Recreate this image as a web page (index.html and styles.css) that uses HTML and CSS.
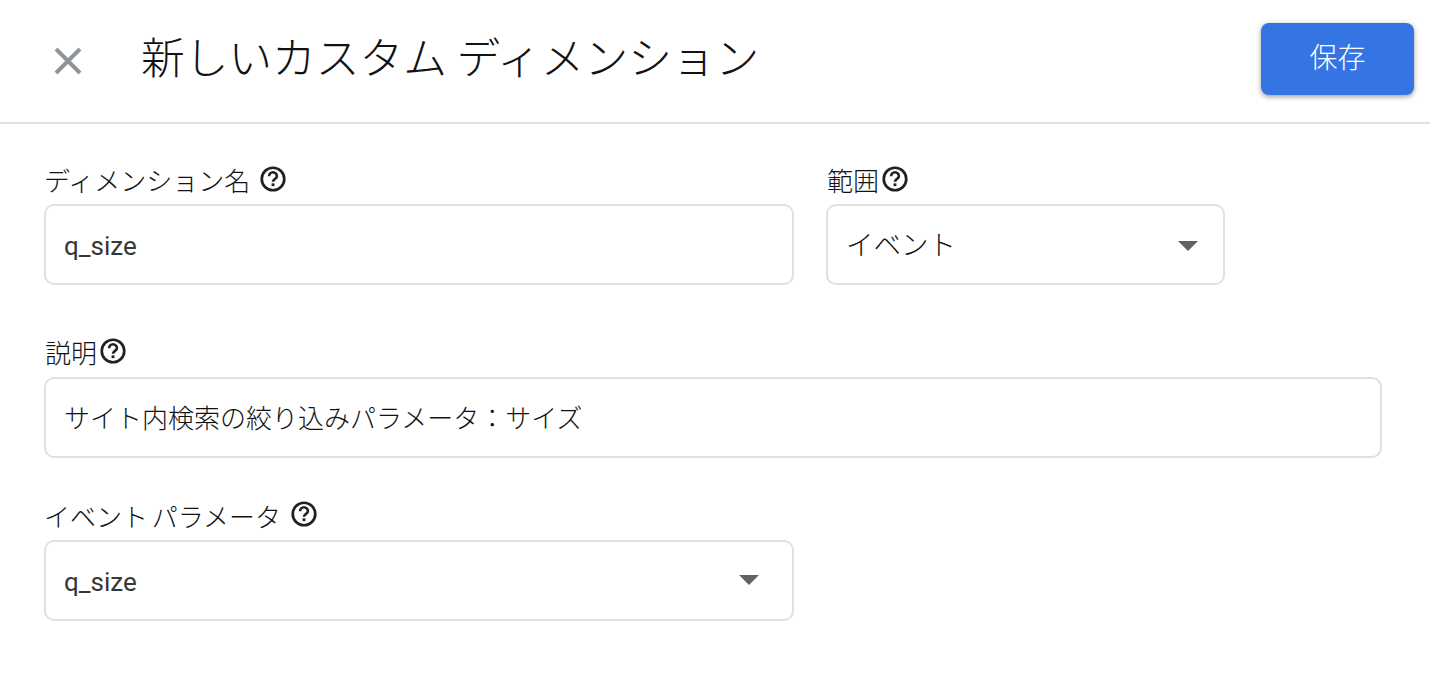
FILE: index.html
```html
<!DOCTYPE html>
<html lang="ja">
<head>
<meta charset="utf-8">
<title>新しいカスタム ディメンション</title>
<link rel="stylesheet" href="styles.css">
</head>
<body>
<svg class="defs" width="0" height="0" aria-hidden="true"><symbol id="help" viewBox="0 0 24 24"><circle cx="12" cy="12" r="10.4" fill="none" stroke="#202124" stroke-width="2.5"/><path d="M8.4 9.4a3.6 3.6 0 0 1 7.2 0c0 2.4-3.6 2.6-3.6 5.1" fill="none" stroke="#202124" stroke-width="2.4"/><rect x="10.7" y="16" width="2.6" height="2.6" fill="#202124"/></symbol></svg>
<header class="topbar">
  <button class="close" aria-label="閉じる">
    <svg viewBox="0 0 28 28" width="28" height="28"><path d="M2 2 26 26M26 2 2 26" fill="none" stroke="#8f9499" stroke-width="4"/></svg>
  </button>
  <h1 class="title">新しいカスタム ディメンション</h1>
  <button class="save">保存</button>
</header>
<main class="form">
  <div class="row row-first">
    <div class="field field-name">
      <div class="label">ディメンション名<svg class="help help-gap"><use href="#help"/></svg></div>
      <div class="box">q_size</div>
    </div>
    <div class="field field-scope">
      <div class="label label-inset">範囲<svg class="help"><use href="#help"/></svg></div>
      <div class="box select select-scope"><span class="scope-text">イベント</span><span class="arrow"></span></div>
    </div>
  </div>
  <div class="row row-desc">
    <div class="field field-full">
      <div class="label label-inset">説明<svg class="help"><use href="#help"/></svg></div>
      <div class="box box-desc">サイト内検索の絞り込みパラメータ：サイズ</div>
    </div>
  </div>
  <div class="row row-param">
    <div class="field field-name">
      <div class="label">イベント パラメータ<svg class="help help-gap"><use href="#help"/></svg></div>
      <div class="box select select-param">q_size<span class="arrow"></span></div>
    </div>
  </div>
</main>
</body>
</html>
```
FILE: styles.css
```css
* { box-sizing: border-box; }
html, body { margin: 0; height: 100%; background: #fff; overflow: hidden; }
body { font-family: Roboto, "Noto Sans CJK JP", sans-serif; color: #2a2b2d; }
.defs { display: block; height: 0; }
.topbar {
  display: flex;
  align-items: center;
  height: 124px;
  border-bottom: 2px solid #dfe0e2;
  padding: 0 16px 0 54px;
}
.close { width: 28px; height: 28px; padding: 0; border: 0; background: none; display: block; margin-right: 59px; }
.close svg { display: block; }
.title {
  margin: 0 0 12px;
  flex: 1;
  font-weight: 300;
  font-size: 43.7px;
  line-height: 60px;
  font-family: "Noto Sans CJK JP", sans-serif;
  color: #111214;
}
.save {
  width: 153px;
  height: 72px;
  margin-bottom: 4px;
  padding: 0 0 6px;
  border: 0;
  border-radius: 8px;
  background: #3574e3;
  color: #fff;
  font-family: "Noto Sans CJK JP", sans-serif;
  font-weight: 300;
  font-size: 28px;
  box-shadow: 0 2px 4px rgba(60,64,67,.35), 0 1px 6px rgba(60,64,67,.2);
}
.form { padding: 0 48px 0 44px; }
.row { display: flex; gap: 32px; }
.row-first { padding-top: 40px; }
.row-desc { padding-top: 52px; }
.row-param { padding-top: 42px; }
.field-name { width: 750px; }
.field-scope { width: 399px; }
.field-full { width: 1338px; }
.label {
  display: flex;
  align-items: center;
  height: 40px;
  padding-bottom: 9px;
  font-size: 26px;
  font-weight: 300;
  font-family: "Noto Sans CJK JP", sans-serif;
  color: #111214;
  word-spacing: -2px;
}
.label-inset { padding-left: 1px; }
.row-desc .label { padding-bottom: 11px; }
.row-param .label { padding-bottom: 10px; }
.help { width: 26px; height: 26px; margin-left: 3px; margin-bottom: 2px; flex: none; }
.help-gap { margin-left: 10px; }
.box {
  display: flex;
  align-items: center;
  justify-content: space-between;
  height: 81px;
  border: 2px solid #dfe0e2;
  border-radius: 10px;
  padding: 2px 30px 0 18px;
  font-size: 26px;
  color: #36373a;
}
.box-desc { padding: 0 30px 2px 18px; font-weight: 300; color: #111214; }
.select-scope { padding-right: 25px; }
.select-param { padding-right: 33px; }
.select-param .arrow { margin-top: -4px; }
.scope-text { font-size: 27.5px; font-weight: 300; margin-top: -5px; color: #111214; }
.arrow {
  width: 0; height: 0;
  border-left: 10px solid transparent;
  border-right: 10px solid transparent;
  border-top: 10px solid #5f6368;
}
```
